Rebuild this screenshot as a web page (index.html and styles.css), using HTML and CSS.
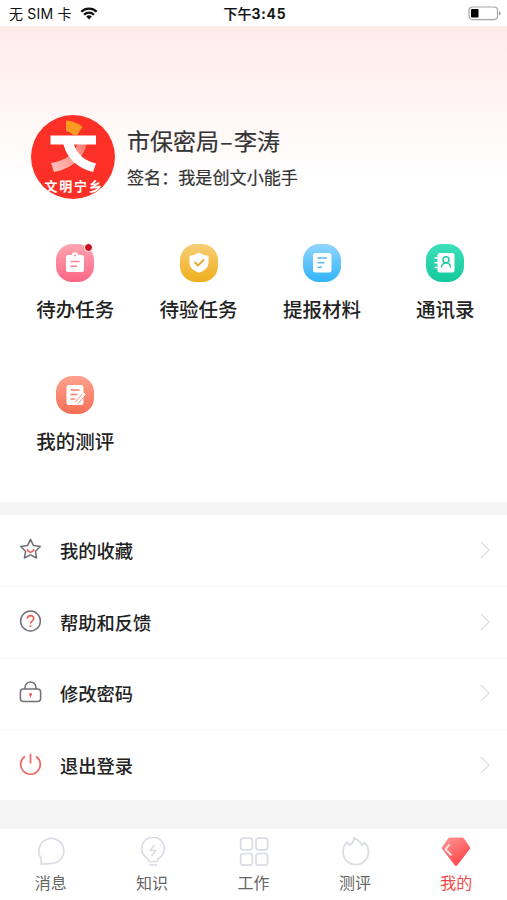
FILE: index.html
```html
<!DOCTYPE html>
<html lang="zh-CN">
<head>
  <meta charset="UTF-8">
  <meta name="viewport" content="width=device-width, initial-scale=1.0">
  <title>我的</title>
  <link rel="stylesheet" href="styles.css">
</head>
<body>
  <!-- Status bar -->
  <div class="status-bar">
    <div class="carrier">
      <span>无 SIM 卡</span>
      <svg class="wifi" viewBox="0 0 18 13" width="18" height="13">
        <path d="M1.3 4.7a11 11 0 0 1 15.4 0M4.1 7.7a7 7 0 0 1 9.8 0" fill="none" stroke="#111" stroke-width="2.3"/>
        <path d="M9 12.5l-2.8-2.9a4 4 0 0 1 5.6 0z" fill="#111"/>
      </svg>
    </div>
    <div class="time">下午<b>3:45</b></div>
    <svg class="battery" viewBox="0 0 33 15" width="33" height="15">
      <rect x="1" y="1" width="28.5" height="12.6" rx="3.5" fill="#fff" stroke="#a5a5a5" stroke-width="1.2"/>
      <rect x="3" y="3" width="7.5" height="8.6" rx="1" fill="#000"/>
      <path d="M31 5v4.6q1.5-.8 1.5-2.3T31 5z" fill="#999"/>
    </svg>
  </div>

  <!-- Profile -->
  <div class="profile">
    <svg class="avatar" viewBox="0 0 84 84" width="84" height="84">
      <defs>
        <clipPath id="round"><circle cx="42" cy="42" r="42"/></clipPath>
        <linearGradient id="fade" x1="1" y1="0" x2="0" y2="1">
          <stop offset="0" stop-color="#ff7a72"/><stop offset="1" stop-color="#ffc5c0"/>
        </linearGradient>
      </defs>
      <g clip-path="url(#round)">
        <rect width="84" height="84" fill="#fc3027"/>
        <path d="M35 5.500q10 .5 16.500 6.500L46 20h-4q-2-3-7-4z" fill="#fb9b22"/>
        <path d="M46.500 29h9C53 43 40 54 23 57l-3-9c14-2 23-9 26.500-19z" fill="url(#fade)"/>
        <path d="M19.500 20.500H65v9H43C46 39 54 46 65 48.500l-3 8.500C46 53 36 43 32.500 29.500h-13z" fill="#fff"/>
        <text class="avatar-text" x="43" y="75.500" text-anchor="middle">文明宁乡</text>
      </g>
    </svg>
    <div class="profile-info">
      <div class="name">市保密局<span class="dash">–</span>李涛</div>
      <div class="signature">签名：我是创文小能手</div>
    </div>
  </div>

  <!-- Shortcuts -->
  <div class="shortcuts">
    <div class="shortcut">
      <div class="shortcut-icon pink">
        <svg viewBox="0 0 38 38" width="38" height="38">
          <rect x="10" y="11" width="18" height="17" rx="2" fill="#fff"/>
          <circle cx="19" cy="11.500" r="3.200" fill="#fff"/><circle cx="19" cy="11.500" r="1" fill="#ff8fa2"/>
          <path d="M14.500 17.500h9M14.500 22.300h6.500" stroke="#fb8399" stroke-width="1.500"/>
        </svg>
        <span class="badge"></span>
      </div>
      <div class="shortcut-label">待办任务</div>
    </div>
    <div class="shortcut">
      <div class="shortcut-icon yellow">
        <svg viewBox="0 0 38 38" width="38" height="38">
          <path d="M19 8.500q4 3 9.500 3.200v7q0 6.500-9.500 10-9.500-3.500-9.500-10v-7Q15 11.500 19 8.500z" fill="#fff"/>
          <path d="M14.500 18l3.500 3.500 6-6" fill="none" stroke="#e9a82b" stroke-width="1.800"/>
        </svg>
      </div>
      <div class="shortcut-label">待验任务</div>
    </div>
    <div class="shortcut">
      <div class="shortcut-icon blue">
        <svg viewBox="0 0 38 38" width="38" height="38">
          <rect x="10" y="9" width="18.500" height="19.500" rx="2.500" fill="#fff"/>
          <path d="M14.500 14h9.500M14.500 18.700h7M14.500 23.300h4.500" stroke="#57bdf8" stroke-width="1.600"/>
        </svg>
      </div>
      <div class="shortcut-label">提报材料</div>
    </div>
    <div class="shortcut">
      <div class="shortcut-icon green">
        <svg viewBox="0 0 38 38" width="38" height="38">
          <rect x="11.500" y="9" width="17" height="19.500" rx="2.500" fill="#fff"/>
          <path d="M8.500 14h4M8.500 18.700h4M8.500 23.500h4" stroke="#fff" stroke-width="1.600"/>
          <circle cx="20" cy="15.800" r="3" fill="none" stroke="#22c9a2" stroke-width="1.500"/>
          <path d="M15.300 23.500q.7-4.500 4.700-4.700 4 .2 4.700 4.700" fill="none" stroke="#22c9a2" stroke-width="1.500"/>
        </svg>
      </div>
      <div class="shortcut-label">通讯录</div>
    </div>
    <div class="shortcut">
      <div class="shortcut-icon orange">
        <svg viewBox="0 0 38 38" width="38" height="38">
          <rect x="10.500" y="9" width="17" height="20" rx="2.500" fill="#fff"/>
          <path d="M14.500 14h9M14.500 18.500h7M14.500 23h4.500" stroke="#fa8068" stroke-width="1.600"/>
          <path d="M27.500 19l-7 8" stroke="#fa8068" stroke-width="3.800"/>
          <path d="M28.800 17.500L21 26.500l-1.500 2" stroke="#fff" stroke-width="2.500"/>
        </svg>
      </div>
      <div class="shortcut-label">我的测评</div>
    </div>
  </div>

  <!-- Menu -->
  <div class="menu">
    <div class="menu-item">
      <svg class="menu-icon" viewBox="0 0 24 24" width="24" height="24">
        <path d="M12.500 1.400l3 6.200 6.900.9-5 4.700 1.200 6.800-6.100-3.200L6.400 20l1.200-6.800-5-4.700 6.900-.9z" fill="none" stroke="#707076" stroke-width="1.500" stroke-linejoin="round"/>
        <path d="M9.200 11.200q.7 3 3.300 3t3.300-3" fill="none" stroke="#f25752" stroke-width="1.500"/>
      </svg>
      <span>我的收藏</span>
      <svg class="arrow" viewBox="0 0 10 18" width="10" height="18"><path d="M1 1l8 8-8 8"/></svg>
    </div>
    <div class="menu-item">
      <svg class="menu-icon" viewBox="0 0 24 24" width="24" height="24">
        <circle cx="12.500" cy="11" r="9.900" fill="none" stroke="#707076" stroke-width="1.500"/>
        <path d="M9.400 8.700c0-4.200 6.500-4 6.400-.3 0 2.500-3.300 2.300-3.300 5.200" fill="none" stroke="#f25752" stroke-width="1.600"/>
        <circle cx="12.500" cy="16" r="1" fill="#f25752"/>
      </svg>
      <span>帮助和反馈</span>
      <svg class="arrow" viewBox="0 0 10 18" width="10" height="18"><path d="M1 1l8 8-8 8"/></svg>
    </div>
    <div class="menu-item">
      <svg class="menu-icon" viewBox="0 0 24 24" width="24" height="24">
        <path d="M7 8.300V6.500a5.500 5.500 0 0 1 11 0v1.800" fill="none" stroke="#707076" stroke-width="1.500"/>
        <rect x="2.400" y="8" width="20.200" height="12.500" rx="3" fill="none" stroke="#707076" stroke-width="1.500"/>
        <circle cx="12.500" cy="13.300" r="1.400" fill="#f25752"/><path d="M12.500 13v3.200" stroke="#f25752" stroke-width="1.200"/>
      </svg>
      <span>修改密码</span>
      <svg class="arrow" viewBox="0 0 10 18" width="10" height="18"><path d="M1 1l8 8-8 8"/></svg>
    </div>
    <div class="menu-item">
      <svg class="menu-icon" viewBox="0 0 24 24" width="24" height="24">
        <path d="M6.800 3.500a9.800 9.800 0 1 0 11.400 0M12.500 .8v9.700" fill="none" stroke="#ef6560" stroke-width="1.700"/>
      </svg>
      <span>退出登录</span>
      <svg class="arrow" viewBox="0 0 10 18" width="10" height="18"><path d="M1 1l8 8-8 8"/></svg>
    </div>
  </div>

  <!-- Tab bar -->
  <div class="tab-bar">
    <div class="tab">
      <svg viewBox="0 0 30 30" width="30" height="30">
        <path d="M5.300 27.200l-.3-6.200A12.500 12.500 0 1 1 16 26.500z"/>
      </svg>
      <span>消息</span>
    </div>
    <div class="tab">
      <svg viewBox="0 0 30 30" width="30" height="30">
        <path d="M12 24.500q0-2-2.500-3.700a11.300 11.300 0 1 1 13 0q-2.500 1.700-2.500 3.700zM12 28h8"/>
        <path class="bolt" d="M17.500 8l-4.500 5.500h6L14.500 19"/>
      </svg>
      <span>知识</span>
    </div>
    <div class="tab">
      <svg viewBox="0 0 30 30" width="30" height="30">
        <rect x="1.700" y="1.200" width="11.600" height="11.600" rx="2.500"/><rect x="17" y="1.200" width="11.600" height="11.600" rx="2.500"/>
        <rect x="1.700" y="16.500" width="11.600" height="11.600" rx="2.500"/><rect x="17" y="16.500" width="11.600" height="11.600" rx="2.500"/>
      </svg>
      <span>工作</span>
    </div>
    <div class="tab">
      <svg viewBox="0 0 30 30" width="30" height="30">
        <path d="M14 .8q6 3 8 7.500 1.500-1 2.500-2.800Q28.500 9.500 28.500 15c0 7-5.500 12.500-12.700 12.500S3 22 3 15q0-6 4-10 .5 2.500 3 3 3.500-2 4-7.200z"/>
      </svg>
      <span>测评</span>
    </div>
    <div class="tab active">
      <svg viewBox="0 0 30 30" width="30" height="30">
        <defs>
          <linearGradient id="gem" x1="0" y1="0" x2=".6" y2="1">
            <stop offset="0" stop-color="#ff9995"/><stop offset="1" stop-color="#ff454b"/>
          </linearGradient>
        </defs>
        <path class="gem" d="M8.800 .5h12.400q1 0 1.600.8l6.200 8.900q.7 1-.1 1.900L16.200 28.300q-1.200 1.200-2.400 0L1.100 12.100q-.8-.9-.1-1.900l6.200-8.900q.6-.8 1.600-.8z"/>
        <path class="shine" d="M8.500 7.300l-4 5 6 6.200"/>
      </svg>
      <span>我的</span>
    </div>
  </div>
</body>
</html>
```
FILE: styles.css
```css
* {
  box-sizing: border-box;
}
body {
  margin: 0;
  height: 900px;
  display: flex;
  flex-direction: column;
  overflow: hidden;
  background: #f5f5f5;
  color: #222;
  font-family: "Noto Sans CJK SC", sans-serif;
}
svg {
  display: block;
  flex-shrink: 0;
}
.status-bar {
  height: 26px;
  padding: 1px 6px 0 9px;
  display: grid;
  grid-template-columns: 1fr auto 1fr;
  align-items: center;
  background: #fff;
  font-family: Inter, "Noto Sans CJK SC", sans-serif;
  font-size: 14px;
  line-height: 24px;
  color: #111;
}
.carrier {
  display: flex;
  align-items: center;
  gap: 8px;
  letter-spacing: 0.2px;
}
.time {
  font-weight: 500;
  -webkit-text-stroke: 0.2px;
}
.time b {
  font-weight: 600;
  letter-spacing: 0.9px;
}
.battery {
  justify-self: end;
}
.profile {
  height: 188px;
  padding: 88.500px 31px 0;
  display: flex;
  gap: 12px;
  background: linear-gradient(#ffebe9, #fff 155px);
}
.avatar-text {
  font-size: 13px;
  font-weight: 700;
  letter-spacing: 1.800px;
  fill: #fff;
}
.name {
  margin-top: 8px;
  font-size: 23px;
  line-height: 34px;
  color: #333;
  -webkit-text-stroke: 0.2px;
}
.dash {
  display: inline-block;
  width: 15px;
  text-align: center;
}
.signature {
  margin-top: 7px;
  font-size: 17.100px;
  line-height: 26px;
  color: #333;
  -webkit-text-stroke: 0.2px;
}
.shortcuts {
  height: 288px;
  padding: 30px 0 0 13.500px;
  display: grid;
  grid-template-columns: repeat(4, 1fr);
  grid-auto-rows: 132px;
  background: #fff;
}
.shortcut {
  display: flex;
  flex-direction: column;
  align-items: center;
}
.shortcut-icon {
  position: relative;
  width: 38px;
  height: 38px;
  border-radius: 16px;
}
.pink {
  background: linear-gradient(#ffa5b1, #fa6685);
}
.yellow {
  background: linear-gradient(#f8ce75, #eeae1c);
}
.blue {
  background: linear-gradient(#91d5fc, #30b4fb);
}
.green {
  background: linear-gradient(#3ddfbb, #13c99c);
}
.orange {
  background: linear-gradient(#ffa28d, #f56e54);
}
.badge {
  position: absolute;
  top: -1px;
  right: 1px;
  width: 9px;
  height: 9px;
  border: 1.500px solid #fff;
  border-radius: 50%;
  background: #c8101e;
}
.shortcut-label {
  margin-top: 12px;
  font-size: 19.500px;
  line-height: 30px;
  font-weight: 500;
}
.menu {
  margin-top: 13px;
  height: 285px;
  background: #fff;
}
.menu-item {
  height: 71.800px;
  padding: 0 17px 1px 18px;
  display: flex;
  align-items: center;
  border-bottom: 1px solid #f9f9f9;
  font-size: 18.300px;
  font-weight: 500;
}
.menu-item:last-child {
  border-bottom: 0;
  height: 69.600px;
}
.menu-icon {
  margin-right: 18px;
}
.arrow {
  margin-left: auto;
  fill: none;
  stroke: #dedede;
  stroke-width: 1.200;
}
.tab-bar {
  margin-top: auto;
  height: 71px;
  padding-top: 8px;
  display: flex;
  background: #fff;
}
.tab {
  flex: 1;
  display: flex;
  flex-direction: column;
  align-items: center;
  font-size: 16px;
  line-height: 24px;
  color: #666;
}
.tab span {
  margin-top: 3px;
}
.tab svg {
  fill: none;
  stroke: #d9dce5;
  stroke-width: 1.700;
  stroke-linejoin: round;
}
.tab .bolt {
  stroke-width: 1.500;
}
.tab.active {
  color: #ef4b48;
}
.tab .gem {
  fill: url(#gem);
  stroke: none;
}
.tab .shine {
  stroke: #ffe3e1;
  stroke-width: 2;
}
```
